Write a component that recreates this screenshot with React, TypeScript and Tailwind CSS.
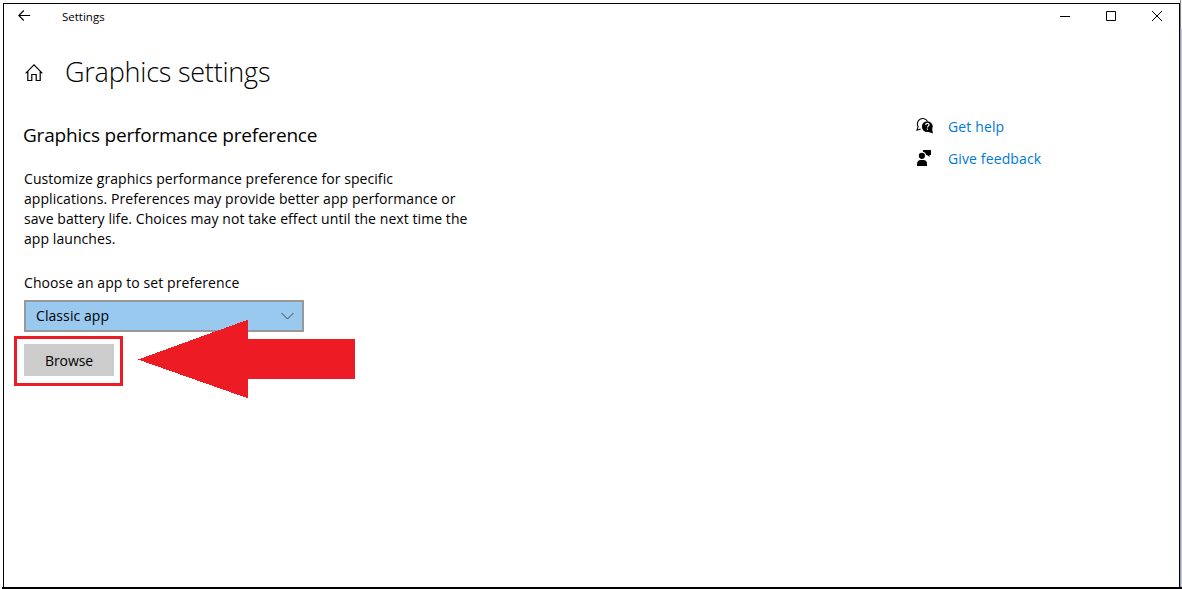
import React from "react";

interface SupportLinkProps {
  label: string;
  icon: React.ReactNode;
}

const HelpIcon = () => (
  <svg width="18" height="18" viewBox="0 0 18 18" fill="none">
    {/* Outlined bubble at the back */}
    <path
      d="M11.4 4.2A5 5 0 1 0 2.1 9.6L1 13.2L4.6 11.9"
      stroke="#000"
      strokeWidth="1.1"
    />
    {/* Solid bubble with the question mark */}
    <circle cx="11.3" cy="9.6" r="5.4" fill="#000" />
    <path d="M16 11.5L17 16.4L12 14.8z" fill="#000" />
    <path
      d="M9.7 8c0-2.1 3.3-2 3.3-.2c0 1.3-1.6 1.3-1.6 2.7M11.4 11.5v1.2"
      stroke="#fff"
      strokeWidth="1.2"
    />
  </svg>
);

const FeedbackIcon = () => (
  <svg width="18" height="18" viewBox="0 0 18 18" fill="#000">
    <circle cx="5.9" cy="6.8" r="3.1" />
    <path d="M1 17v-2.2C1 12.3 2.7 11 4.5 11h3C9.6 11 11 12.5 11 14.8V17z" />
    <path d="M7 1h8v5h-1.5v2L11 6h-1C10 4.5 9 3.2 7 2.8z" />
  </svg>
);

const SupportLink: React.FC<SupportLinkProps> = ({ label, icon }) => (
  <a href="#" className="flex h-8 items-center">
    <span className="w-8 shrink-0">{icon}</span>
    <span className="whitespace-nowrap text-[14px] tracking-[0.13px] text-[#0078d7]">
      {label}
    </span>
  </a>
);

const TitleBar = () => (
  <header className="flex h-[25px] items-center justify-between">
    <div className="flex items-center">
      <svg
        className="ml-[14px] -mt-px"
        width="13"
        height="12"
        viewBox="0 0 13 12"
        fill="none"
        stroke="#000"
        strokeWidth="1.1"
      >
        <path d="M12.2 5.5H.8M5.8 .5L.8 5.5L5.8 10.5" />
      </svg>
      <span className="ml-[31px] text-[11.5px] leading-4">Settings</span>
    </div>
    {/* Window controls */}
    <div className="mr-[17px] -mt-px flex gap-9">
      <svg width="10" height="10" viewBox="0 0 10 10" stroke="#000">
        <path d="M0 5.5H10" />
      </svg>
      <svg width="10" height="10" viewBox="0 0 10 10" stroke="#000" fill="none">
        <path d="M.5 .5H9.5V9.5H.5z" />
      </svg>
      <svg width="10" height="10" viewBox="0 0 10 10" stroke="#000">
        <path d="M0 0L10 10M10 0L0 10" />
      </svg>
    </div>
  </header>
);

export default function App() {
  return (
    <div className="flex h-[589px] w-[1182px] flex-col overflow-hidden bg-white font-['Open_Sans','Noto_Sans',sans-serif] text-black">
      <div className="flex flex-1">
        <div className="relative ml-[3px] mt-[3px] flex w-[1177px] flex-col border-l border-r border-t border-black">
          <TitleBar />

          <div className="flex h-[88px] items-center">
            <svg
              className="ml-[21px] -mt-px"
              width="19"
              height="18"
              viewBox="0 0 19 18"
              fill="none"
              stroke="#000"
              strokeWidth="1.2"
            >
              <path d="M.6 9.3L9 .9L17.4 9.3M2.8 7.5V16.5H6.8V10.5H11.2V16.5H15.2V7.5" />
            </svg>
            <h1 className="ml-[21px] -mt-0.5 whitespace-nowrap text-[27px] font-[350] leading-9 tracking-[-0.22px]">
              Graphics settings
            </h1>
          </div>

          <main className="flex justify-between pl-5">
            <section className="flex w-[470px] flex-col items-start">
              <h2 className="-ml-px mt-1 whitespace-nowrap text-[19px] leading-7 tracking-[-0.2px]">
                Graphics performance preference
              </h2>
              <p className="mt-5 whitespace-nowrap text-[14px] leading-5 tracking-[0.07px]">
                Customize graphics performance preference for specific
                <br />
                applications. Preferences may provide better app performance or
                <br />
                save battery life. Choices may not take effect until the next time the
                <br />
                app launches.
              </p>
              <label className="mt-6 text-[14px] leading-5 tracking-[0.09px]">
                Choose an app to set preference
              </label>
              <button className="mt-[7px] flex h-8 w-[280px] items-center justify-between border-2 border-[#999] bg-[#99c9ef] pb-px pl-2.5 pr-2 text-[14px] leading-5 tracking-[0.08px]">
                Classic app
                <svg
                  className="mt-px"
                  width="13"
                  height="8"
                  viewBox="0 0 13 8"
                  fill="none"
                  stroke="#444"
                >
                  <path d="M.5 1L6.5 7L12.5 1" />
                </svg>
              </button>
              {/* Highlighted browse button */}
              <div className="-ml-2.5 mt-1 flex h-[50px] w-[109px] items-start border-[3px] border-[#ed1c24] pl-[7px] pt-[5px]">
                <button className="h-8 w-[90px] bg-[#ccc] text-[14px] tracking-[-0.1px]">
                  Browse
                </button>
              </div>
            </section>

            <aside className="mr-[130px] mt-[-7px] w-[133px]">
              <SupportLink label="Get help" icon={<HelpIcon />} />
              <SupportLink label="Give feedback" icon={<FeedbackIcon />} />
            </aside>
          </main>

          {/* Callout arrow over the form */}
          <svg
            className="absolute left-[134px] top-[316px]"
            width="218"
            height="79"
            viewBox="0 0 218 79"
            fill="#ed1c24"
            shapeRendering="crispEdges"
          >
            <path d="M0 39.5L109 0H110V19H217V59H110V78H109z" />
          </svg>
        </div>
        {/* Sliver of the desktop behind the window */}
        <div className="flex flex-1 flex-col">
          <div className="h-[29px] border-l border-[#8c8c8c] bg-[#f4f4f4]" />
          <div className="flex-1 border-l border-[#9a9db3] bg-[#c6c9d8]" />
        </div>
      </div>
      <div className="ml-0.5 h-0.5 bg-black" />
    </div>
  );
}
